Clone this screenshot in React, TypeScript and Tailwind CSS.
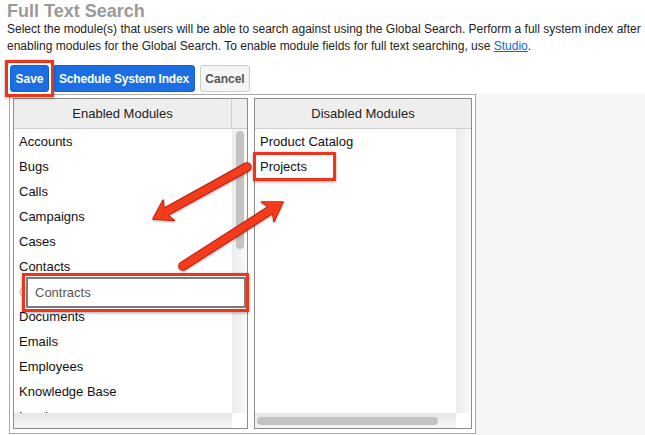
import React from "react";

const enabled = [
  "Accounts",
  "Bugs",
  "Calls",
  "Campaigns",
  "Cases",
  "Contacts",
  "Contracts",
  "Documents",
  "Emails",
  "Employees",
  "Knowledge Base",
  "Leads",
];

const disabled = ["Product Catalog", "Projects"];

function Arrow({ tail, tip }: { tail: [number, number]; tip: [number, number] }) {
  const dx = tip[0] - tail[0];
  const dy = tip[1] - tail[1];
  const len = Math.hypot(dx, dy);
  const ux = dx / len;
  const uy = dy / len;
  const nx = -uy;
  const ny = ux;
  const hl = 18;
  const hw = 11.5;
  const bx = tip[0] - hl * ux;
  const by = tip[1] - hl * uy;
  const c1 = [bx + hw * nx, by + hw * ny];
  const c2 = [bx - hw * nx, by - hw * ny];
  const nX = tip[0] - 13 * ux;
  const nY = tip[1] - 13 * uy;
  const poly = `${tip[0]},${tip[1]} ${c1[0]},${c1[1]} ${nX},${nY} ${c2[0]},${c2[1]}`;
  return (
    <g filter="url(#ashadow)">
      <line x1={tail[0]} y1={tail[1]} x2={nX} y2={nY} stroke="#b3230c" strokeWidth={9.5} strokeLinecap="round" />
      <polygon points={poly} fill="#b3230c" stroke="#b3230c" strokeWidth={1.6} strokeLinejoin="round" />
      <line x1={tail[0]} y1={tail[1]} x2={nX} y2={nY} stroke="#f43a1c" strokeWidth={7.5} strokeLinecap="round" />
      <polygon points={poly} fill="#f43a1c" />
    </g>
  );
}

function Panel({
  title,
  items,
  widthClass,
  splitHeader,
  vThumb,
  hThumb,
  ghost,
}: {
  title: string;
  items: string[];
  widthClass: string;
  splitHeader?: boolean;
  vThumb?: boolean;
  hThumb?: boolean;
  ghost?: string;
}) {
  return (
    <div className={`${widthClass} h-[331px] border border-[#8c8c8c] flex flex-col bg-white`}>
      <div className="h-[30px] flex border-b border-[#cfcfcf] bg-[#eeeeee]">
        {splitHeader ? (
          <>
            <div className="flex-1 flex items-center justify-center border-r border-[#cfcfcf] text-[13px] text-[#222]">
              {title}
            </div>
            <div className="w-[15px]" />
          </>
        ) : (
          <div className="flex-1 flex items-center justify-center text-[13px] text-[#222]">{title}</div>
        )}
      </div>
      <div className="h-[284px] flex">
        <div className="flex-1 overflow-hidden">
          {items.map((it) => (
            <div
              key={it}
              className={`h-[25px] leading-[25px] pl-[5px] text-[13px] whitespace-nowrap ${
                it === ghost ? "text-[#c8c8c8]" : "text-[#111]"
              }`}
            >
              {it}
            </div>
          ))}
        </div>
        <div className="w-[15px] bg-gradient-to-r from-[#ececec] to-[#f9f9f9] pt-[2px] pl-[4px]">
          {vThumb && <div className="w-[8px] h-[118px] rounded-full bg-[#c3c3c3]" />}
        </div>
      </div>
      <div className="h-[15px] flex">
        <div className="flex-1 bg-gradient-to-b from-[#e6e6e6] to-[#f6f6f6] pt-[4px] pl-[2px]">
          {hThumb && <div className="w-[181px] h-[8px] rounded-full bg-[#c3c3c3]" />}
        </div>
        <div className="w-[15px] bg-white" />
      </div>
    </div>
  );
}

export default function App() {
  return (
    <div className="relative w-[645px] h-[435px] overflow-hidden bg-white font-['Liberation_Sans',Arial,sans-serif]">
      <div className="pl-[7px]">
        <h1 className="text-[18px] leading-[22px] font-bold text-[#9a9a9a]">Full Text Search</h1>
        <p className="-mt-[1px] text-[12px] leading-[17px] text-[#222] whitespace-nowrap">
          Select the module(s) that users will be able to search against using the Global Search. Perform a full system index after
          <br />
          enabling modules for the Global Search. To enable module fields for full text searching, use{" "}
          <a className="text-[#0b6bd6] underline">Studio</a>.
        </p>
      </div>

      <div className="flex pl-[10px] mt-[10px] h-[27px]">
        <button className="w-[39px] h-[27px] rounded-[3px] bg-[#1b6fe2] border border-[#1560cc] text-white text-[12px] font-bold">
          Save
        </button>
        <button className="ml-[4px] w-[142px] h-[27px] rounded-[3px] bg-[#1b6fe2] border border-[#1560cc] text-white text-[12px] font-bold tracking-[-0.2px]">
          Schedule System Index
        </button>
        <button className="ml-[5px] w-[50px] h-[27px] rounded-[3px] bg-[#f5f5f5] border border-[#cccccc] text-[#555] text-[12px] font-bold">
          Cancel
        </button>
      </div>

      <div className="flex mt-[2px] h-[341px]">
        <div className="w-[9px] bg-white" />
        <div className="w-[467px] h-[340px] border border-[#aaaaaa] pt-[3px] pb-[4px] px-[3px] flex gap-[6px] bg-white">
          <Panel title="Enabled Modules" items={enabled} widthClass="w-[235px]" splitHeader vThumb ghost="Contracts" />
          <Panel title="Disabled Modules" items={disabled} widthClass="w-[218px]" hThumb />
        </div>
        <div className="flex-1 bg-[#f5f5f5]" />
      </div>

      {/* red frame around Save */}
      <div className="absolute left-[5px] top-[60px] w-[49px] h-[37px] border-[3px] border-[#f0341c] shadow-[0_1px_3px_rgba(0,0,0,0.35)]" />

      {/* dragged item */}
      <div className="absolute left-[26px] top-[277px] w-[220px] h-[31px] border-2 border-[#7b7b7b] bg-white flex items-center pl-[7px] text-[13px] text-[#555]">
        Contracts
      </div>
      <div className="absolute left-[22px] top-[273px] w-[227px] h-[39px] border-[3px] border-[#f0341c] shadow-[0_1px_3px_rgba(0,0,0,0.35)]" />

      {/* frame around Projects */}
      <div className="absolute left-[253px] top-[152px] w-[83px] h-[29px] border-[3px] border-[#f0341c] shadow-[0_1px_3px_rgba(0,0,0,0.35)]" />

      <svg className="absolute left-0 top-0 pointer-events-none" width={645} height={435}>
        <defs>
          <filter id="ashadow" x="-20%" y="-20%" width="140%" height="140%">
            <feDropShadow dx="0" dy="1" stdDeviation="1.2" floodColor="#000" floodOpacity="0.35" />
          </filter>
        </defs>
        <Arrow tail={[247, 167]} tip={[153, 219]} />
        <Arrow tail={[183, 266]} tip={[283, 202]} />
      </svg>
    </div>
  );
}
